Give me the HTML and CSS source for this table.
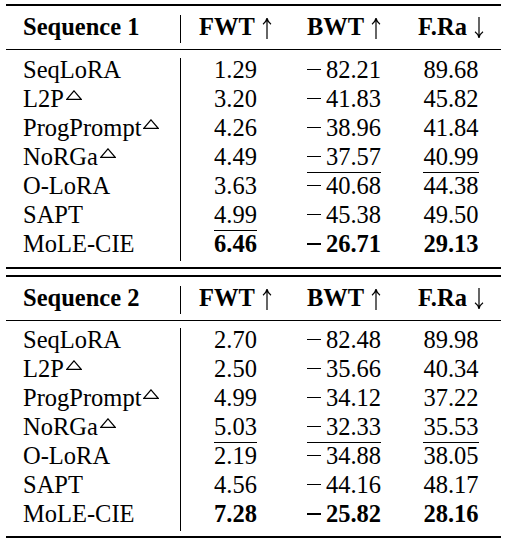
FILE: index.html
```html
<!DOCTYPE html>
<html lang="en">
<head>
<meta charset="utf-8">
<title>Results</title>
<link rel="stylesheet" href="styles.css">
</head>
<body>
<div class="tbl">
  <section class="sec sec1">
    <div class="head">
      <div class="row">
        <div class="c name b">Sequence 1</div>
        <div class="c v b">FWT<svg class="arr" width="10" height="22" viewBox="0 0 10 22"><path d="M5 1.5V22M1 7.2C3 5.8 4.4 3.8 5 1.2C5.6 3.8 7 5.8 9 7.2"/></svg></div>
        <div class="c b">BWT<svg class="arr" width="10" height="22" viewBox="0 0 10 22"><path d="M5 1.5V22M1 7.2C3 5.8 4.4 3.8 5 1.2C5.6 3.8 7 5.8 9 7.2"/></svg></div>
        <div class="c last b">F.Ra<svg class="arr" width="10" height="22" viewBox="0 0 10 22"><path d="M5 0V20.5M1 14.8C3 16.2 4.4 18.2 5 20.8C5.6 18.2 7 16.2 9 14.8"/></svg></div>
      </div>
    </div>
    <div class="body">
      <div class="row"><div class="c name">SeqLoRA</div><div class="c v">1.29</div><div class="c"><span class="m" aria-label="−"></span>82.21</div><div class="c last">89.68</div></div>
      <div class="row"><div class="c name">L2P<svg class="tri" width="16" height="10" viewBox="0 0 16 10"><path d="M8 0.8L15.2 9.3H0.8Z"/></svg></div><div class="c v">3.20</div><div class="c"><span class="m" aria-label="−"></span>41.83</div><div class="c last">45.82</div></div>
      <div class="row"><div class="c name">ProgPrompt<svg class="tri" width="16" height="10" viewBox="0 0 16 10"><path d="M8 0.8L15.2 9.3H0.8Z"/></svg></div><div class="c v">4.26</div><div class="c"><span class="m" aria-label="−"></span>38.96</div><div class="c last">41.84</div></div>
      <div class="row"><div class="c name">NoRGa<svg class="tri" width="16" height="10" viewBox="0 0 16 10"><path d="M8 0.8L15.2 9.3H0.8Z"/></svg></div><div class="c v">4.49</div><div class="c"><span class="u"><span class="m" aria-label="−"></span>37.57</span></div><div class="c last"><span class="u">40.99</span></div></div>
      <div class="row"><div class="c name">O-LoRA</div><div class="c v">3.63</div><div class="c"><span class="m" aria-label="−"></span>40.68</div><div class="c last">44.38</div></div>
      <div class="row"><div class="c name">SAPT</div><div class="c v"><span class="u">4.99</span></div><div class="c"><span class="m" aria-label="−"></span>45.38</div><div class="c last">49.50</div></div>
      <div class="row"><div class="c name">MoLE-CIE</div><div class="c v b">6.46</div><div class="c b"><span class="m" aria-label="−"></span>26.71</div><div class="c last b">29.13</div></div>
    </div>
  </section>
  <section class="sec sec2">
    <div class="head">
      <div class="row">
        <div class="c name b">Sequence 2</div>
        <div class="c v b">FWT<svg class="arr" width="10" height="22" viewBox="0 0 10 22"><path d="M5 1.5V22M1 7.2C3 5.8 4.4 3.8 5 1.2C5.6 3.8 7 5.8 9 7.2"/></svg></div>
        <div class="c b">BWT<svg class="arr" width="10" height="22" viewBox="0 0 10 22"><path d="M5 1.5V22M1 7.2C3 5.8 4.4 3.8 5 1.2C5.6 3.8 7 5.8 9 7.2"/></svg></div>
        <div class="c last b">F.Ra<svg class="arr" width="10" height="22" viewBox="0 0 10 22"><path d="M5 0V20.5M1 14.8C3 16.2 4.4 18.2 5 20.8C5.6 18.2 7 16.2 9 14.8"/></svg></div>
      </div>
    </div>
    <div class="body">
      <div class="row"><div class="c name">SeqLoRA</div><div class="c v">2.70</div><div class="c"><span class="m" aria-label="−"></span>82.48</div><div class="c last">89.98</div></div>
      <div class="row"><div class="c name">L2P<svg class="tri" width="16" height="10" viewBox="0 0 16 10"><path d="M8 0.8L15.2 9.3H0.8Z"/></svg></div><div class="c v">2.50</div><div class="c"><span class="m" aria-label="−"></span>35.66</div><div class="c last">40.34</div></div>
      <div class="row"><div class="c name">ProgPrompt<svg class="tri" width="16" height="10" viewBox="0 0 16 10"><path d="M8 0.8L15.2 9.3H0.8Z"/></svg></div><div class="c v">4.99</div><div class="c"><span class="m" aria-label="−"></span>34.12</div><div class="c last">37.22</div></div>
      <div class="row"><div class="c name">NoRGa<svg class="tri" width="16" height="10" viewBox="0 0 16 10"><path d="M8 0.8L15.2 9.3H0.8Z"/></svg></div><div class="c v"><span class="u">5.03</span></div><div class="c"><span class="u"><span class="m" aria-label="−"></span>32.33</span></div><div class="c last"><span class="u">35.53</span></div></div>
      <div class="row"><div class="c name">O-LoRA</div><div class="c v">2.19</div><div class="c"><span class="m" aria-label="−"></span>34.88</div><div class="c last">38.05</div></div>
      <div class="row"><div class="c name">SAPT</div><div class="c v">4.56</div><div class="c"><span class="m" aria-label="−"></span>44.16</div><div class="c last">48.17</div></div>
      <div class="row"><div class="c name">MoLE-CIE</div><div class="c v b">7.28</div><div class="c b"><span class="m" aria-label="−"></span>25.82</div><div class="c last b">28.16</div></div>
    </div>
  </section>
</div>
</body>
</html>
```

FILE: styles.css
```css
html, body {
  margin: 0;
  padding: 0;
  background: #fff;
}
body {
  padding: 4px 0 0 6px;
  color: #000;
  font-family: "Liberation Serif", "Times New Roman", serif;
  font-size: 24.5px;
}
.tbl {
  width: 495px;
}
.sec {
  border-top: 2px solid #000;
}
.sec1 {
  border-bottom: 2px solid #000;
}
.sec2 {
  margin-top: 6px;
  border-bottom: 2px solid #000;
}
.head {
  padding: 9px 0 6px;
  border-bottom: 1px solid #000;
}
.body {
  padding: 8px 0 6px;
}
.sec2 .body {
  padding: 7px 0 5px;
}
.row {
  display: grid;
  grid-template-columns: 174px 110px 108px 103px;
  height: 29px;
  line-height: 24px;
}
.head .row {
  height: 28px;
}
.c {
  text-align: center;
  white-space: nowrap;
}
.name {
  text-align: left;
  padding-left: 17px;
}
.v {
  border-left: 1px solid #000;
}
.last {
  padding-left: 3px;
}
.b {
  font-weight: bold;
}
.m {
  display: inline-block;
  width: 14px;
  height: 1px;
  margin-right: 5px;
  background: #000;
  vertical-align: 8px;
}
.b .m {
  height: 2px;
  vertical-align: 7px;
}
.u {
  display: inline-block;
  padding-bottom: 2.6px;
  border-bottom: 1px solid #000;
}
.arr {
  margin-left: 7px;
  vertical-align: -4px;
  fill: none;
  stroke: #000;
  stroke-width: 1.2;
}
.tri {
  margin-left: 2px;
  vertical-align: 7px;
  fill: none;
  stroke: #000;
  stroke-width: 1.2;
}
```
